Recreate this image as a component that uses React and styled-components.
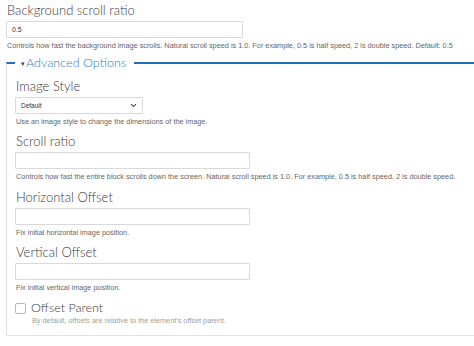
import React from "react";
import styled, { createGlobalStyle } from "styled-components";

const GlobalStyle = createGlobalStyle`
  html, body {
    margin: 0;
    padding: 0;
    background: #fff;
    overflow: hidden;
  }
  body {
    font-family: "Liberation Sans", Arial, sans-serif;
  }
`;

const Page = styled.div`
  width: 474px;
  height: 346px;
  padding: 2px 0 0 6px;
  box-sizing: border-box;
  overflow: hidden;
`;

const Field = styled.div`
  margin-bottom: ${(p) => (p.$last ? "0" : "7.5px")};
`;

const Label = styled.label`
  display: block;
  font-family: Lato, "Open Sans", sans-serif;
  font-weight: 300;
  font-size: 13px;
  line-height: 16px;
  color: #3a3a3a;
  padding-left: 1px;
`;

const TextInput = styled.input`
  display: block;
  box-sizing: border-box;
  margin: 3px 0 0 0;
  width: ${(p) => p.$width || 235}px;
  height: 17px;
  padding: 0 5px;
  border: 1px solid #d9d9d9;
  border-radius: 1px;
  font-family: "Liberation Sans", Arial, sans-serif;
  font-size: 7px;
  color: #333;
  background: #fff;
  outline: none;
`;

const SelectBox = styled.div`
  margin-top: 3px;
  width: 128px;
  height: 17px;
  box-sizing: border-box;
  border: 1px solid #d9d9d9;
  border-radius: 1px;
  display: flex;
  align-items: center;
  justify-content: space-between;
  padding: 0 5px 0 5px;
  font-size: 6.5px;
  color: #333;
`;

const Description = styled.div`
  margin-top: ${(p) => (p.$muted ? "0" : "3px")};
  font-size: 7.3px;
  line-height: 9px;
  color: ${(p) => (p.$muted ? "#a0a0a0" : "#666")};
  white-space: nowrap;
  padding-left: 1px;
`;

const Fieldset = styled.fieldset`
  margin: 4.5px 0 0 0;
  width: 520px;
  box-sizing: border-box;
  border: 1px solid #e2e2e2;
  border-top: 2px solid #2270bd;
  padding: 7px 8px 10px 8px;
  min-width: 0;
`;

const Legend = styled.legend`
  padding: 0 8px 0 2px;
  margin-left: 0;
  font-family: Lato, "Open Sans", sans-serif;
  font-weight: 300;
  font-size: 12.6px;
  line-height: 16px;
  color: #2f7bc5;
  display: flex;
  align-items: center;
`;

const Caret = styled.span`
  font-size: 7px;
  margin: 0 1px 0 4px;
  color: #3a3a3a;
`;

const CheckRow = styled.div`
  display: flex;
  align-items: flex-start;
  gap: 5px;
`;

const CheckBox = styled.span`
  display: block;
  width: 11px;
  height: 11px;
  box-sizing: border-box;
  margin-top: 3px;
  border: 1px solid #b8b8b8;
  border-radius: 2px;
  background: #fff;
`;

const CheckText = styled.div`
  display: flex;
  flex-direction: column;
`;

const CheckLabel = styled.span`
  font-family: Lato, "Open Sans", sans-serif;
  font-weight: 300;
  font-size: 12.5px;
  line-height: 16px;
  color: #3a3a3a;
`;

const Chevron = () => (
  <svg width="7" height="5" viewBox="0 0 7 5">
    <path d="M1 1.2 L3.5 3.6 L6 1.2" fill="none" stroke="#444" strokeWidth="1.1" />
  </svg>
);

export default function App() {
  return (
    <Page>
      <GlobalStyle />
      <Field $last>
        <Label>Background scroll ratio</Label>
        <TextInput $width={237} defaultValue="0.5" />
        <Description>
          Controls how fast the background image scrolls. Natural scroll speed is 1.0. For example, 0.5 is half
          speed, 2 is double speed. Default: 0.5
        </Description>
      </Field>
      <Fieldset>
        <Legend>
          <Caret>▾</Caret>Advanced Options
        </Legend>
        <Field>
          <Label>Image Style</Label>
          <SelectBox>
            <span>Default</span>
            <Chevron />
          </SelectBox>
          <Description>Use an image style to change the dimensions of the image.</Description>
        </Field>
        <Field>
          <Label>Scroll ratio</Label>
          <TextInput />
          <Description>
            Controls how fast the entire block scrolls down the screen. Natural scroll speed is 1.0. For example, 0.5
            is half speed, 2 is double speed.
          </Description>
        </Field>
        <Field>
          <Label>Horizontal Offset</Label>
          <TextInput />
          <Description>Fix initial horizontal image position.</Description>
        </Field>
        <Field>
          <Label>Vertical Offset</Label>
          <TextInput />
          <Description>Fix initial vertical image position.</Description>
        </Field>
        <Field $last>
          <CheckRow>
            <CheckBox />
            <CheckText>
              <CheckLabel>Offset Parent</CheckLabel>
              <Description $muted>By default, offsets are relative to the element's offset parent.</Description>
            </CheckText>
          </CheckRow>
        </Field>
      </Fieldset>
    </Page>
  );
}
